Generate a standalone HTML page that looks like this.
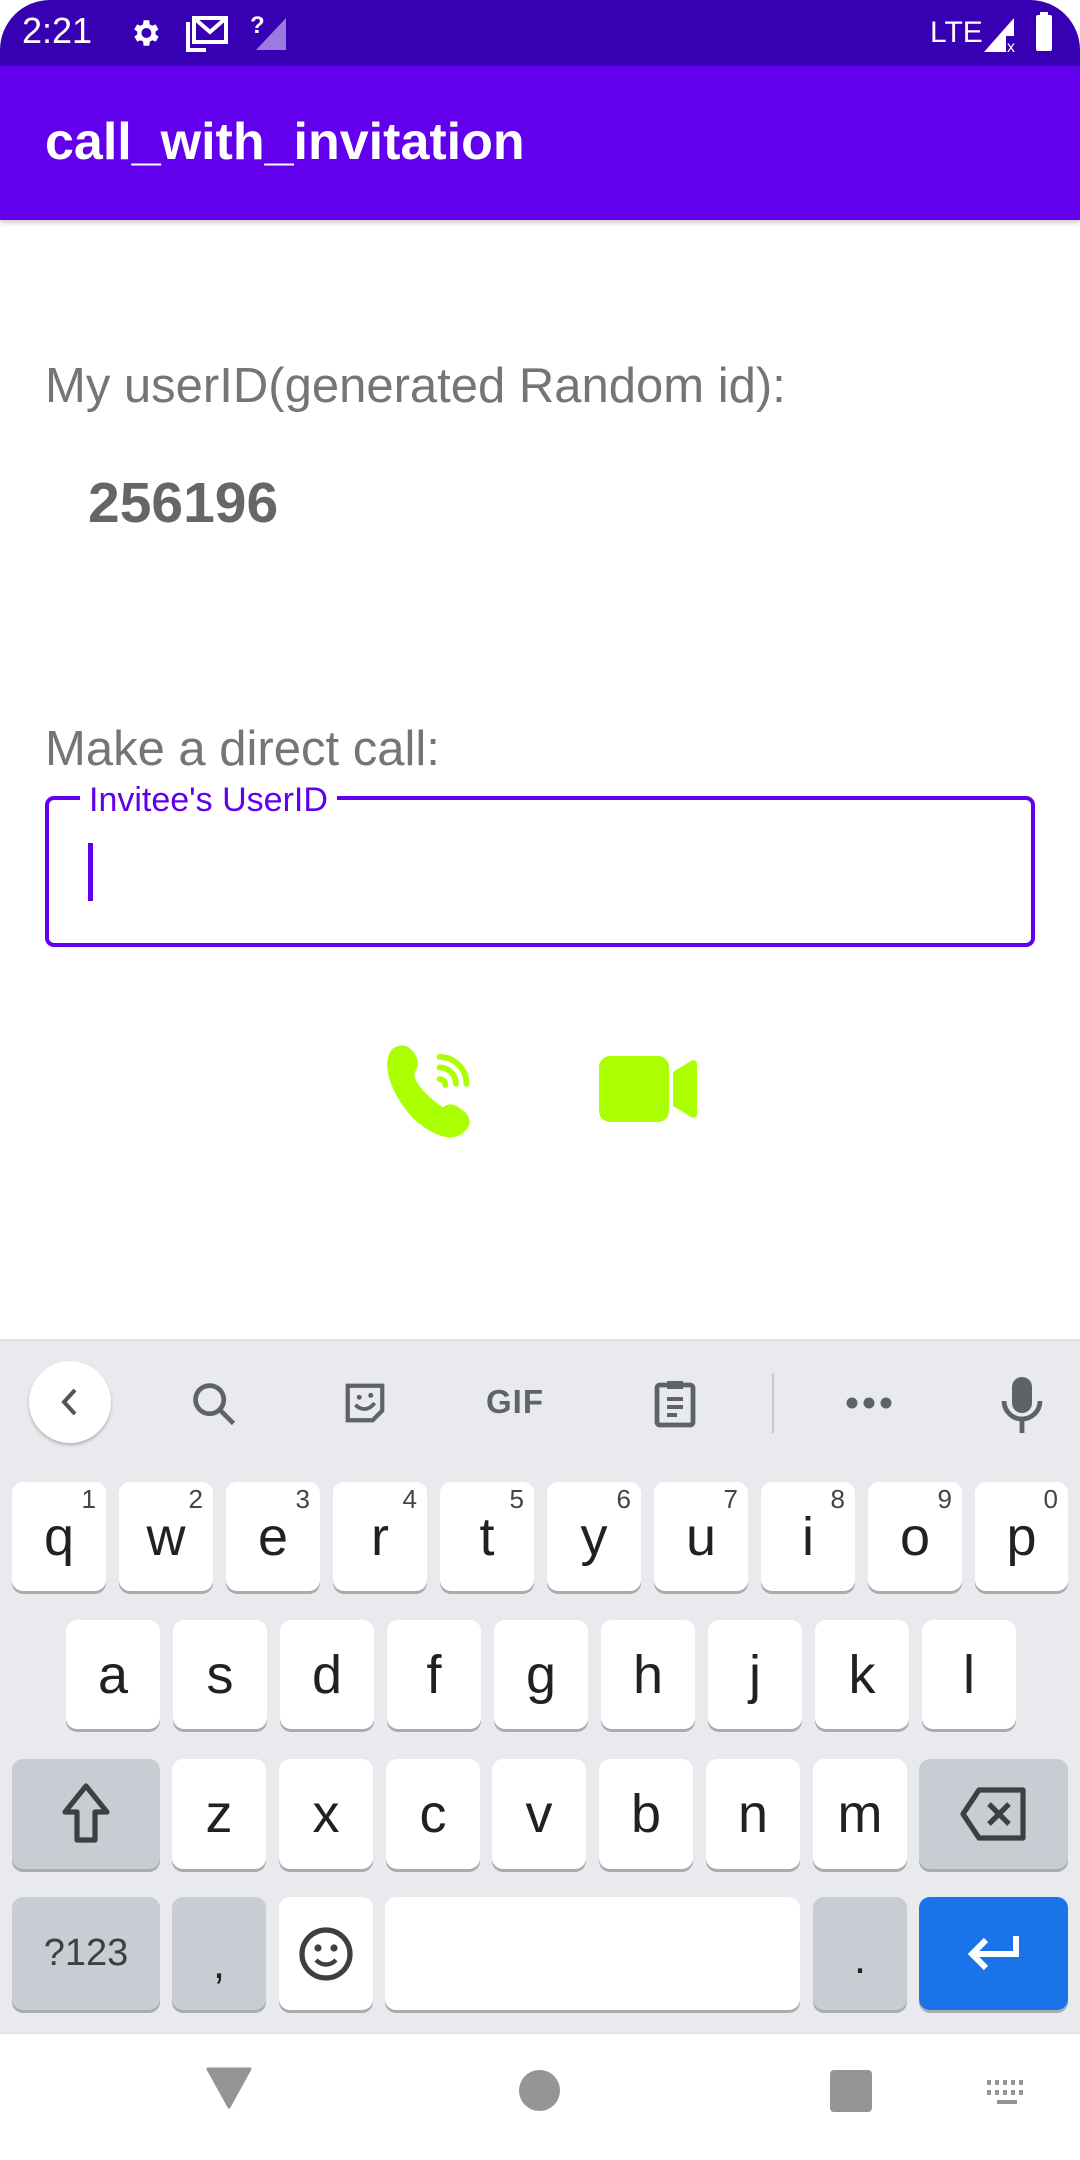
<!DOCTYPE html>
<html><head><meta charset="utf-8"><style>
*{margin:0;padding:0;box-sizing:border-box}
body{width:1080px;height:2160px;position:relative;background:#fff;font-family:"Liberation Sans",Roboto,sans-serif;overflow:hidden}
.a{position:absolute}
.k{position:absolute;background:#fff;border-radius:11px;box-shadow:0 3px 0 #a9abaf;color:#202124;font-size:54px;text-align:center;display:flex;align-items:center;justify-content:center}
.s{background:#c9ccd2}
.n{position:absolute;top:4px;right:10px;font-size:26px;color:#444;line-height:1}
</style></head><body>
<div class="a" style="left:0;top:0;width:1080px;height:66px;background:#3700B3;border-radius:50px 50px 0 0"></div>
<div class="a" style="left:22px;top:10px;color:#fff;font-size:36px;">2:21</div>
<svg class="a" style="left:128px;top:16px" width="34" height="34" viewBox="0 0 24 24"><path fill="#fff" d="M19.4 13a7.5 7.5 0 0 0 0-2l2.1-1.6-2-3.5-2.5 1a7 7 0 0 0-1.7-1L15 3h-4l-.4 2.9a7 7 0 0 0-1.7 1l-2.5-1-2 3.5L6.6 11a7.5 7.5 0 0 0 0 2l-2.1 1.6 2 3.5 2.5-1a7 7 0 0 0 1.7 1L11 21h4l.4-2.9a7 7 0 0 0 1.7-1l2.5 1 2-3.5zM13 15.5a3.5 3.5 0 1 1 0-7 3.5 3.5 0 0 1 0 7z"/></svg>
<svg class="a" style="left:186px;top:16px" width="42" height="36" viewBox="0 0 42 36"><path fill="none" stroke="#fff" stroke-width="4" d="M2 6v28h18M8 2h32v24H8zM8 2l16 14L40 2"/></svg>
<div class="a" style="left:250px;top:12px;color:#fff;font-size:24px;font-weight:bold">?</div>
<svg class="a" style="left:256px;top:18px" width="30" height="32"><path fill="#9b7be0" d="M0 32L30 0V32z"/></svg>
<div class="a" style="left:930px;top:16px;color:#fff;font-size:30px">LTE</div>
<svg class="a" style="left:984px;top:14px" width="34" height="38"><path fill="#fff" d="M0 38L30 4V22H22V38z"/><text x="23" y="38" fill="#fff" font-size="16" font-family="Liberation Sans">x</text></svg>
<div class="a" style="left:1036px;top:15px;width:16px;height:36px;background:#fff;border-radius:2px"></div>
<div class="a" style="left:1040px;top:12px;width:8px;height:4px;background:#fff"></div>
<div class="a" style="left:0;top:66px;width:1080px;height:154px;background:#6200EE;box-shadow:0 3px 5px rgba(0,0,0,.2)"></div>
<div class="a" style="left:45px;top:112px;color:#fff;font-size:52px;font-weight:bold">call_with_invitation</div>
<div class="a" style="left:45px;top:358px;color:#757575;font-size:49px">My userID(generated Random id):</div>
<div class="a" style="left:88px;top:470px;color:#666;font-size:57px;font-weight:bold">256196</div>
<div class="a" style="left:45px;top:721px;color:#757575;font-size:49px">Make a direct call:</div>
<div class="a" style="left:45px;top:796px;width:990px;height:151px;border:4px solid #6200EE;border-radius:9px"></div>
<div class="a" style="left:80px;top:781px;padding:0 9px;background:#fff;color:#6200EE;font-size:34px">Invitee's UserID</div>
<div class="a" style="left:88px;top:843px;width:5px;height:58px;background:#6200EE"></div>
<svg class="a" style="left:382px;top:1044px" width="94" height="96" viewBox="-1 0 80 82"><path fill="#AAFF00" d="M8 4c6-4 12-4 17 2 5 6 6 12 2 18-3 5 8 20 24 30 5-4 10-3 16 2 8 6 9 13 2 19-9 9-24 5-42-10C9 47-4 18 8 4z"/><path fill="none" stroke="#AAFF00" stroke-width="5" stroke-linecap="round" d="M48 20a14 14 0 0 1 14 14M48 11a23 23 0 0 1 23 23M48 30a5 5 0 0 1 5 5"/></svg>
<svg class="a" style="left:599px;top:1056px" width="98" height="66" viewBox="0 0 98 66"><rect x="0" y="0" width="70" height="66" rx="11" fill="#AAFF00"/><path fill="#AAFF00" d="M74 16l18-11c3-2 6 0 6 3v50c0 3-3 5-6 3L74 50z"/></svg>
<div class="a" style="left:0;top:1339px;width:1080px;height:693px;background:#e8eaed;border-top:2px solid #dfe1e5"></div>
<div class="a" style="left:29px;top:1361px;width:82px;height:82px;border-radius:50%;background:#fff;box-shadow:0 2px 3px rgba(0,0,0,.25)"></div>
<svg class="a" style="left:56px;top:1386px" width="28" height="32"><path d="M19 4L8 16l11 12" fill="none" stroke="#555" stroke-width="4"/></svg>
<svg class="a" style="left:188px;top:1378px" width="52" height="52" viewBox="0 0 24 24"><circle cx="10" cy="10" r="6.5" fill="none" stroke="#5f6368" stroke-width="2.2"/><path d="M15 15l6 6" stroke="#5f6368" stroke-width="2.2"/></svg>
<svg class="a" style="left:342px;top:1380px" width="46" height="46" viewBox="0 0 24 24"><path d="M3 3h18v13l-5 5H3z" fill="none" stroke="#5f6368" stroke-width="2.2"/><circle cx="9" cy="9" r="1.3" fill="#5f6368"/><circle cx="15" cy="8" r="1.3" fill="#5f6368"/><path d="M7 13c3 3 7 3 10-1" fill="none" stroke="#5f6368" stroke-width="2"/></svg>
<div class="a" style="left:486px;top:1383px;font-size:33px;font-weight:bold;color:#5f6368;letter-spacing:1px">GIF</div>
<svg class="a" style="left:652px;top:1377px" width="46" height="52" viewBox="0 0 22 26"><rect x="2" y="4" width="18" height="20" rx="1.5" fill="none" stroke="#5f6368" stroke-width="2.4"/><rect x="7" y="2" width="8" height="4" fill="#5f6368"/><path d="M7 11h8M7 15h8M7 19h5" stroke="#5f6368" stroke-width="2"/></svg>
<div class="a" style="left:772px;top:1373px;width:2px;height:60px;background:#c8cacd"></div>
<svg class="a" style="left:846px;top:1396px" width="46" height="14"><g fill="#5f6368"><circle cx="6" cy="7" r="5.5"/><circle cx="23" cy="7" r="5.5"/><circle cx="40" cy="7" r="5.5"/></g></svg>
<svg class="a" style="left:1000px;top:1377px" width="44" height="56" viewBox="0 0 22 28"><rect x="6" y="0" width="10" height="18" rx="5" fill="#5f6368"/><path d="M2 12a9 9 0 0 0 18 0M11 21v7" fill="none" stroke="#5f6368" stroke-width="2.4"/></svg>

<div class="k" style="left:12px;top:1482px;width:94px;height:109px">q<span class="n">1</span></div>
<div class="k" style="left:119px;top:1482px;width:94px;height:109px">w<span class="n">2</span></div>
<div class="k" style="left:226px;top:1482px;width:94px;height:109px">e<span class="n">3</span></div>
<div class="k" style="left:333px;top:1482px;width:94px;height:109px">r<span class="n">4</span></div>
<div class="k" style="left:440px;top:1482px;width:94px;height:109px">t<span class="n">5</span></div>
<div class="k" style="left:547px;top:1482px;width:94px;height:109px">y<span class="n">6</span></div>
<div class="k" style="left:654px;top:1482px;width:94px;height:109px">u<span class="n">7</span></div>
<div class="k" style="left:761px;top:1482px;width:94px;height:109px">i<span class="n">8</span></div>
<div class="k" style="left:868px;top:1482px;width:94px;height:109px">o<span class="n">9</span></div>
<div class="k" style="left:975px;top:1482px;width:93px;height:109px">p<span class="n">0</span></div>

<div class="k" style="left:66px;top:1620px;width:94px;height:109px">a</div>
<div class="k" style="left:173px;top:1620px;width:94px;height:109px">s</div>
<div class="k" style="left:280px;top:1620px;width:94px;height:109px">d</div>
<div class="k" style="left:387px;top:1620px;width:94px;height:109px">f</div>
<div class="k" style="left:494px;top:1620px;width:94px;height:109px">g</div>
<div class="k" style="left:601px;top:1620px;width:94px;height:109px">h</div>
<div class="k" style="left:708px;top:1620px;width:94px;height:109px">j</div>
<div class="k" style="left:815px;top:1620px;width:94px;height:109px">k</div>
<div class="k" style="left:922px;top:1620px;width:94px;height:109px">l</div>

<div class="k s" style="left:12px;top:1759px;width:148px;height:110px"><svg width="50" height="64" viewBox="0 0 25 32"><path d="M12.5 2L2 15h6v14h9V15h6z" fill="none" stroke="#3c4043" stroke-width="2.6" stroke-linejoin="round"/></svg></div>
<div class="k" style="left:172px;top:1759px;width:94px;height:110px">z</div>
<div class="k" style="left:279px;top:1759px;width:94px;height:110px">x</div>
<div class="k" style="left:386px;top:1759px;width:94px;height:110px">c</div>
<div class="k" style="left:492px;top:1759px;width:94px;height:110px">v</div>
<div class="k" style="left:599px;top:1759px;width:94px;height:110px">b</div>
<div class="k" style="left:706px;top:1759px;width:94px;height:110px">n</div>
<div class="k" style="left:813px;top:1759px;width:94px;height:110px">m</div>
<div class="k s" style="left:919px;top:1759px;width:149px;height:110px"><svg width="70" height="56" viewBox="0 0 35 28"><path d="M10 2h22v24H10L2 14z" fill="none" stroke="#3c4043" stroke-width="2.6" stroke-linejoin="round"/><path d="M15 9l10 10M25 9L15 19" stroke="#3c4043" stroke-width="2.6"/></svg></div>

<div class="k s" style="left:12px;top:1897px;width:148px;height:113px;font-size:38px;color:#3c4043">?123</div>
<div class="k s" style="left:172px;top:1897px;width:94px;height:113px;font-size:44px;padding-top:20px">,</div>
<div class="k" style="left:279px;top:1897px;width:94px;height:113px"><svg width="56" height="56" viewBox="0 0 28 28"><circle cx="14" cy="14" r="12" fill="none" stroke="#3c4043" stroke-width="2.6"/><circle cx="10" cy="11" r="1.8" fill="#3c4043"/><circle cx="18" cy="11" r="1.8" fill="#3c4043"/><path d="M9 17c3 3 7 3 10 0" fill="none" stroke="#3c4043" stroke-width="2.2"/></svg></div>
<div class="k" style="left:385px;top:1897px;width:415px;height:113px"></div>
<div class="k s" style="left:813px;top:1897px;width:94px;height:113px;font-size:44px;padding-top:10px">.</div>
<div class="k" style="left:919px;top:1897px;width:149px;height:113px;background:#1a73e8"><svg width="56" height="44" viewBox="0 0 28 22"><path d="M25 2v9H4M10 4L3 11l7 7" fill="none" stroke="#fff" stroke-width="3"/></svg></div>

<div class="a" style="left:0;top:2032px;width:1080px;height:128px;background:#fff;border-top:2px solid #e2e3e5"></div>
<svg class="a" style="left:206px;top:2067px" width="46" height="42"><path d="M2 2h42L23 40z" fill="#959595" stroke="#959595" stroke-width="3" stroke-linejoin="round"/></svg>
<div class="a" style="left:519px;top:2070px;width:41px;height:41px;border-radius:50%;background:#959595"></div>
<div class="a" style="left:830px;top:2070px;width:42px;height:42px;border-radius:4px;background:#959595"></div>
<svg class="a" style="left:985px;top:2080px" width="44" height="30"><g fill="#959595"><rect x="2" y="0" width="4" height="5"/><rect x="10" y="0" width="4" height="5"/><rect x="18" y="0" width="4" height="5"/><rect x="26" y="0" width="4" height="5"/><rect x="34" y="0" width="4" height="5"/><rect x="2" y="10" width="4" height="5"/><rect x="10" y="10" width="4" height="5"/><rect x="18" y="10" width="4" height="5"/><rect x="26" y="10" width="4" height="5"/><rect x="34" y="10" width="4" height="5"/><rect x="12" y="20" width="20" height="4"/></g></svg>
</body></html>
